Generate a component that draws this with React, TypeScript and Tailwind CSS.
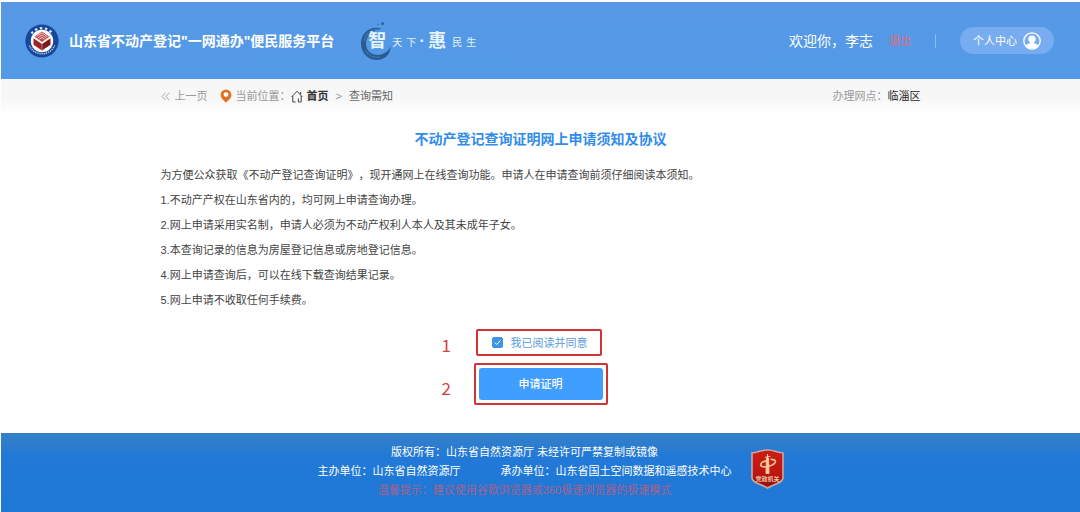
import { useState } from "react";

const NOTICES = [
  "为方便公众获取《不动产登记查询证明》，现开通网上在线查询功能。申请人在申请查询前须仔细阅读本须知。",
  "1.不动产产权在山东省内的，均可网上申请查询办理。",
  "2.网上申请采用实名制，申请人必须为不动产权利人本人及其未成年子女。",
  "3.本查询记录的信息为房屋登记信息或房地登记信息。",
  "4.网上申请查询后，可以在线下载查询结果记录。",
  "5.网上申请不收取任何手续费。",
];

function Emblem() {
  return (
    <svg viewBox="0 0 34 34" className="size-[34px] shrink-0" aria-hidden="true">
      <circle cx="17" cy="17" r="16.6" fill="#17479a" />
      <path
        d="M6.500 9.500A13 13 0 0 1 27.500 9.500"
        fill="none"
        stroke="#dfe9f7"
        strokeWidth="2.2"
        strokeDasharray="2.4 2.6"
      />
      <path
        d="M4.300 21.500A13.900 13.900 0 0 0 29.700 21.500"
        fill="none"
        stroke="#b9cdea"
        strokeWidth="1.500"
        strokeDasharray="1.300 .9"
      />
      <circle cx="17" cy="17" r="11.2" fill="#fff" />
      <path d="M17 7.500 24.500 12.800 17 18 9.500 12.800Z" fill="#c0504d" />
      <path
        d="M11.500 12.600 17 8.800 22.500 12.600M12.800 14 17 11 21.200 14M14.300 15.300 17 13.400 19.700 15.300"
        fill="none"
        stroke="#f5dcd8"
        strokeWidth=".8"
      />
      <path d="M8.500 14.200 17 20V26.500L8.500 20.800Z" fill="#9f2428" />
      <path d="M25.500 14.200 17 20V26.500L25.500 20.800Z" fill="#7f1a20" />
      <path d="M17 20V26.500" stroke="#e0a9a5" strokeWidth=".6" />
    </svg>
  );
}

function Slogan() {
  return (
    <div className="relative flex h-10 items-center pl-2 text-[#e3f4ff]">
      <svg
        viewBox="0 0 34 42"
        className="absolute left-0 top-0 h-[42px] w-[34px]"
        aria-hidden="true"
      >
        <path
          d="M22 7.500C10 4.500 1 12 1 22.500 1 32 8 39 16.500 39 24.500 39 30 34 31 25 28.500 30.500 23.500 34 17.500 34 10.500 34 6 29 6 22.500 6 14.500 12.500 8.500 22 7.500Z"
          fill="#2b5a90"
        />
        <path
          d="M20 8.500C12 7 5.500 12 4 20M5 29C8 34.500 14 37 20 36"
          fill="none"
          stroke="#4178b5"
          strokeWidth="1.2"
        />
        <circle cx="22.500" cy="2.600" r="1.500" fill="#2e62a0" />
        <circle cx="18" cy="3.400" r=".6" fill="#2e62a0" />
      </svg>
      <span className="relative flex items-center">
        <b className="text-[18px]">智</b>
        <span className="ml-1.5 mt-1 text-[10px]">天</span>
        <span className="ml-1 mt-1 text-[10px]">下</span>
        <b className="w-3 text-center text-[16px]">·</b>
        <b className="text-[18px]">惠</b>
        <span className="ml-1.5 mt-1 text-[10px]">民</span>
        <span className="ml-1 mt-1 text-[10px]">生</span>
      </span>
    </div>
  );
}

function UserIcon() {
  return (
    <svg viewBox="0 0 18 18" className="size-[18px]" aria-hidden="true">
      <circle cx="9" cy="9" r="8.2" fill="none" stroke="#fff" strokeWidth="1.3" />
      <path
        d="M9 3.400c-2.400 0-3.700 1.500-3.700 3.600 0 1.500.7 2.800 1.700 3.500v.8C5.200 11.900 3.200 12.400 2.600 13.700A7.600 7.600 0 0 0 9 16.600a7.600 7.600 0 0 0 6.400-2.900c-.6-1.300-2.600-1.800-4.400-2.400v-.8c1-.7 1.700-2 1.700-3.500 0-2.100-1.300-3.600-3.700-3.600Z"
        fill="#fff"
      />
    </svg>
  );
}

function PinIcon() {
  return (
    <svg viewBox="0 0 12 14" className="h-[14px] w-3" aria-hidden="true">
      <path
        d="M6 .5A5.400 5.400 0 0 0 .6 5.900C.6 9.300 4 11 6 13.700 8 11 11.400 9.300 11.400 5.900A5.400 5.400 0 0 0 6 .5Z"
        fill="#e3701f"
      />
      <circle cx="6" cy="5.600" r="2.400" fill="#fff" />
    </svg>
  );
}

function HomeIcon() {
  return (
    <svg
      viewBox="0 0 12 13"
      className="h-[13px] w-3"
      fill="none"
      stroke="#444"
      strokeWidth="1"
      aria-hidden="true"
    >
      <path d="M.6 7 6 1.200 11.400 7M9.600 4.500V2M1.800 6V12H4.600M10.200 6V12H7.400V8.500" />
    </svg>
  );
}

function PartyBadge() {
  return (
    <svg viewBox="0 0 33 40" className="h-10 w-[33px] shrink-0" role="img" aria-label="党政机关">
      <defs>
        <linearGradient id="badge-red" x1="0" y1="0" x2="0" y2="1">
          <stop offset="0" stopColor="#cc1c14" />
          <stop offset=".6" stopColor="#c01512" />
          <stop offset="1" stopColor="#8a0d0f" />
        </linearGradient>
      </defs>
      <path
        d="M1 4C7 3.500 10 1 16.500 1 23 1 26 3.500 32 4V29C32 34 22 35 16.500 39 11 35 1 34 1 29Z"
        fill="url(#badge-red)"
        stroke="#cfa79c"
        strokeWidth="1.6"
      />
      <path
        d="M15.500 9H17.500L18 24.500H15ZM13.800 8.400 19.500 7.200M16.500 5V9"
        fill="#f6cf9c"
        stroke="#f6cf9c"
        strokeWidth="1"
      />
      <path
        d="M19.500 10.500C26 10 26 14 20 16.500 14 18.800 9 18 9.800 15.300 10.500 13 13 12.200 15 12.200"
        fill="none"
        stroke="#f6c08f"
        strokeWidth="1.700"
      />
      <text
        x="16.500"
        y="31.500"
        textAnchor="middle"
        fontSize="6"
        fontWeight="700"
        fill="#efc3a0"
      >
        党政机关
      </text>
    </svg>
  );
}

export default function App() {
  const [agreed, setAgreed] = useState(true);

  return (
    <div className="flex min-h-screen flex-col bg-white pl-px pt-0.5 font-['Liberation_Sans','Noto_Sans_CJK_SC',sans-serif] text-[11px] leading-4 text-[#444] [text-spacing-trim:space-all]">
      <header className="flex h-[77px] items-center bg-linear-to-b from-[#5798e6] to-[#529ae7] pl-6 pr-[26px] text-white">
        <Emblem />
        <h1 className="ml-2.5 mr-[26px] text-[14px] font-bold leading-5">
          山东省不动产登记"一网通办"便民服务平台
        </h1>
        <Slogan />
        <div className="ml-auto flex items-center">
          <span className="text-[14px]">欢迎你，李志</span>
          <a href="#logout" className="ml-4 text-[#e8697c]">
            退出
          </a>
          <span className="mx-6 h-[14px] w-px bg-[#8bbcf0]" />
          <button
            type="button"
            className="flex h-[27px] w-[94px] items-center justify-center gap-1.5 rounded-full bg-[#77acf0]"
          >
            个人中心
            <UserIcon />
          </button>
        </div>
      </header>

      <div className="bg-linear-to-b from-[#f7f7f8] from-60% to-white">
        <nav className="mx-auto flex h-[34px] max-w-[760px] items-center text-[#999]">
          <a href="#back" className="flex items-center gap-[5px]">
            <svg
              viewBox="0 0 9 9"
              className="size-[9px]"
              fill="none"
              stroke="#aaa"
              aria-hidden="true"
            >
              <path d="M4.500.8 1.200 4.500 4.500 8.200M8.200.8 4.900 4.500 8.200 8.200" />
            </svg>
            上一页
          </a>
          <span className="ml-3 flex items-center gap-1">
            <PinIcon />
            当前位置：
          </span>
          <a href="#home" className="flex items-center gap-1 font-bold text-[#333]">
            <HomeIcon />
            首页
          </a>
          <span className="mx-[7px]">&gt;</span>
          <span className="text-[#666]">查询需知</span>
          <span className="ml-auto">办理网点：</span>
          <span className="text-[#222]">临淄区</span>
        </nav>
      </div>

      <main className="mx-auto w-full max-w-[760px] pb-7 pt-4">
        <h2 className="text-center text-[14px] font-bold leading-5 text-[#318ceb]">
          不动产登记查询证明网上申请须知及协议
        </h2>
        <div className="mt-[14px] leading-[25px]">
          {NOTICES.map((line) => (
            <p key={line}>{line}</p>
          ))}
        </div>

        <div className="mt-4 grid grid-cols-[32px_134px] items-center justify-center gap-y-[7px] pr-8">
          <span className="pt-1 font-['Noto_Sans_CJK_SC',sans-serif] text-[17px] text-[#d2443f]">
            1
          </span>
          <label className="ml-0.5 mr-1.5 flex h-[27px] items-center gap-2 rounded-xs border-2 border-[#cf3430] pl-[14px] text-[#5b9bd9]">
            <span className="relative flex">
              <input
                type="checkbox"
                checked={agreed}
                onChange={(e) => setAgreed(e.target.checked)}
                className="peer size-[11px] appearance-none rounded-xs border border-[#3f94e6] checked:bg-[#3f94e6]"
              />
              <svg
                viewBox="0 0 11 11"
                className="pointer-events-none absolute inset-0 hidden size-[11px] peer-checked:block"
                fill="none"
                stroke="#fff"
                aria-hidden="true"
              >
                <path d="M2.800 5.600 4.700 7.500 8.300 3.500" />
              </svg>
            </span>
            我已阅读并同意
          </label>
          <span className="pt-2 font-['Noto_Sans_CJK_SC',sans-serif] text-[17px] text-[#d2443f]">
            2
          </span>
          <div className="rounded-xs border-2 border-[#cf3430] p-[3px]">
            <button
              type="button"
              disabled={!agreed}
              className="block h-8 w-full rounded-[3px] bg-[#409eff] font-medium text-white"
            >
              申请证明
            </button>
          </div>
        </div>
      </main>

      <footer className="flex flex-1 items-start justify-center gap-[19px] bg-linear-to-b from-[#3680c7] via-[#2279d7] via-30% to-[#1e78d6] pl-5 pt-2.5 text-white">
        <div className="text-center leading-[19px]">
          <p>版权所有：山东省自然资源厅 未经许可严禁复制或镜像</p>
          <p className="flex gap-10">
            <span>主办单位：山东省自然资源厅</span>
            <span>承办单位：山东省国土空间数据和遥感技术中心</span>
          </p>
          <p className="text-[#a8628c]">
            温馨提示：建议使用谷歌浏览器或360极速浏览器的极速模式
          </p>
        </div>
        <div className="pt-1.5">
          <PartyBadge />
        </div>
      </footer>
    </div>
  );
}
